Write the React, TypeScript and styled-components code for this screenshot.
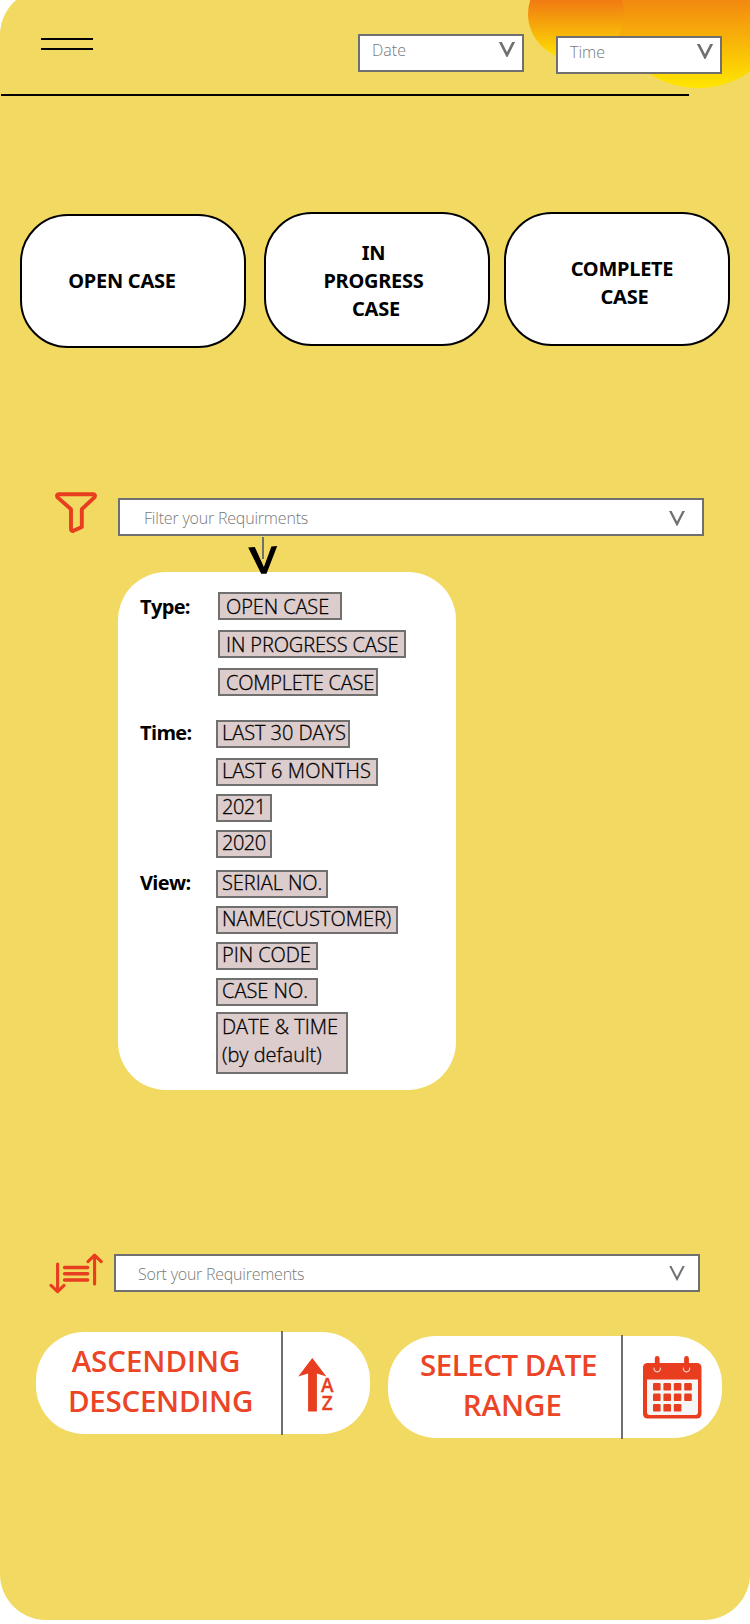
import React from 'react';
import styled, { createGlobalStyle } from 'styled-components';

const ACCENT = '#e83d1e';
const GREY = '#707070';
const SANS = '"Open Sans", "Noto Sans", sans-serif';

const GlobalStyle = createGlobalStyle`
  * { box-sizing: border-box; }
  html, body { margin: 0; background: #fff; }
  body { font-family: ${SANS}; color: #000; }
  svg { display: block; flex: none; }
`;

const Page = styled.div`
  position: relative;
  width: 750px;
  height: 1624px;
  overflow: hidden;
  background: #fff;
`;

const Backdrop = styled.div`
  position: absolute;
  left: 0;
  top: -11px;
  width: 750px;
  height: 1631px;
  border-radius: 46px;
  border-top-right-radius: 0;
  overflow: hidden;
  background: #f2d961;
`;

const Blob = styled.div<{ $x: number; $y: number; $w: number; $h: number }>`
  position: absolute;
  left: ${p => p.$x}px;
  top: ${p => p.$y + 11}px;
  width: ${p => p.$w}px;
  height: ${p => p.$h}px;
  border-radius: 50%;
  background: linear-gradient(#e8401c, #ffe600);
`;

const Content = styled.main`
  position: relative;
  display: flex;
  flex-direction: column;
  align-items: flex-start;
`;

const Header = styled.header`
  display: flex;
  align-items: flex-start;
  height: 94px;
  padding: 34px 28px 0 41px;
`;

const MenuButton = styled.div`
  width: 52px;
  height: 12px;
  margin: 4px 265px 0 0;
  border-top: 2px solid #000;
  border-bottom: 2px solid #000;
`;

const Divider = styled.div`
  width: 688px;
  height: 2px;
  margin-left: 1px;
  background: #000;
`;

const SelectBox = styled.div<{ $width: number; $ml?: number; $mt?: number; $pad: string }>`
  display: flex;
  align-items: flex-start;
  justify-content: space-between;
  width: ${p => p.$width}px;
  height: 38px;
  margin: ${p => p.$mt ?? 0}px 0 0 ${p => p.$ml ?? 0}px;
  padding: ${p => p.$pad};
  border: 2px solid ${GREY};
  background: #fff;
`;

const Placeholder = styled.span<{ $tracking?: number }>`
  font-size: 16px;
  font-weight: 300;
  line-height: 24px;
  letter-spacing: ${p => p.$tracking ?? 0}px;
  color: #787878;
  white-space: nowrap;
`;

const Cases = styled.section`
  display: flex;
  align-items: flex-start;
  height: 136px;
  margin: 116px 0 0 20px;
`;

const CaseCard = styled.div<{ $ml?: number; $mt?: number; $pad: string }>`
  display: flex;
  align-items: center;
  justify-content: center;
  width: 226px;
  height: 134px;
  margin: ${p => p.$mt ?? 0}px 0 0 ${p => p.$ml ?? 0}px;
  padding: ${p => p.$pad};
  border: 2px solid #000;
  border-radius: 48px;
  background: #fff;
  font: 700 20px/28px "Noto Sans", sans-serif;
  letter-spacing: -0.25px;
  text-align: center;
  white-space: pre;
`;

const FieldRow = styled.section<{ $top: number; $left: number }>`
  display: flex;
  align-items: flex-start;
  margin: ${p => p.$top}px 0 0 ${p => p.$left}px;
  height: 44px;
`;

const PointerArrow = styled.svg`
  position: relative;
  z-index: 1;
  margin-left: 246px;
  overflow: visible;
`;

const Panel = styled.section`
  width: 338px;
  height: 518px;
  margin-left: 118px;
  padding: 20px 0 0 22px;
  border-radius: 48px;
  background: #fff;
`;

const Group = styled.div<{ $gap?: number }>`
  display: flex;
  align-items: flex-start;
  margin-top: ${p => p.$gap ?? 0}px;
`;

const GroupLabel = styled.div<{ $lift: number; $width: number }>`
  flex: none;
  width: ${p => p.$width}px;
  margin-top: ${p => 1 - p.$lift}px;
  font-size: 20px;
  font-weight: 700;
  line-height: 28px;
  letter-spacing: -0.65px;
`;

const Chips = styled.div`
  display: flex;
  flex-direction: column;
  align-items: flex-start;
`;

const Chip = styled.div<{ $width: number; $gap: number; $pad: number; $tall?: boolean }>`
  display: flex;
  width: ${p => p.$width}px;
  height: ${p => (p.$tall ? 62 : 28)}px;
  margin-top: ${p => p.$gap}px;
  padding-left: ${p => p.$pad}px;
  border: 2px solid ${GREY};
  background: #dccccc;
`;

const ChipText = styled.span<{ $lift: number; $tracking: number }>`
  margin-top: -${p => p.$lift}px;
  font-size: 20px;
  font-weight: 300;
  line-height: 28px;
  letter-spacing: ${p => p.$tracking}px;
  white-space: pre;
  -webkit-text-stroke: 0.3px #000;
`;

const Actions = styled.section`
  display: flex;
  align-items: flex-start;
  margin: 35px 0 0 36px;
`;

const ActionPill = styled.div<{ $ml?: number; $mt?: number }>`
  display: flex;
  align-items: center;
  width: 334px;
  height: 102px;
  margin: ${p => p.$mt ?? 0}px 0 0 ${p => p.$ml ?? 0}px;
  border-radius: 48px;
  background: #fff;
`;

const ActionText = styled.div<{ $width: number; $padLeft: number }>`
  display: flex;
  flex-direction: column;
  align-items: center;
  width: ${p => p.$width}px;
  padding: 0 0 5px ${p => p.$padLeft}px;
  font-size: 29.5px;
  font-weight: 600;
  line-height: 40px;
  color: #eb4526;
  white-space: nowrap;
`;

const ActionLine = styled.span<{ $tracking: number; $padRight?: number }>`
  padding-right: ${p => p.$padRight ?? 0}px;
  letter-spacing: ${p => p.$tracking}px;
`;

const ActionRule = styled.div`
  flex: none;
  width: 2px;
  height: 104px;
  background: ${GREY};
`;

const IconSlot = styled.div<{ $left: number; $top: number }>`
  padding: ${p => p.$top}px 0 0 ${p => p.$left}px;
`;

const ChevronV = ({ weight = 2.3 }: { weight?: number }) => (
  <svg width="16" height="15" viewBox="0 0 16 15">
    <polyline points="0.3,-2 8,13 15.7,-2" fill="none" stroke={GREY} strokeWidth={weight} />
  </svg>
);

const FunnelIcon = () => (
  <svg width="42" height="42" viewBox="0 0 42 42" fill="none" stroke={ACCENT} strokeWidth="3.9" strokeLinejoin="round">
    <path d="M3.8 2.2H38.2Q41 2.8 39.4 5.4L26.8 17.2V35L18.4 38.8Q16.2 39.4 16 37.2V17.2L2.6 5.4Q1 2.8 3.8 2.2Z" />
  </svg>
);

const SortIcon = () => (
  <svg width="54" height="42" viewBox="0 0 54 42" fill="none" stroke={ACCENT} strokeWidth="3.1" strokeLinecap="round" strokeLinejoin="round">
    <path d="M8.6 12V39.6M2 33.3L8.6 39.6L15 33.3" />
    <path d="M45.6 32V3.2M39 9.6L45.6 3.2L52.2 9.6" />
    <path d="M15.6 15.5H38.6M15.6 21.8H38.6M15.6 28.1H38.6" strokeWidth="3.5" />
  </svg>
);

const AZMark = styled.div`
  display: flex;
  align-items: flex-start;
  height: 54px;
`;

const AZLetters = styled.div`
  display: flex;
  flex-direction: column;
  align-items: center;
  margin: 18px 0 0 -6px;
  font-size: 19px;
  font-weight: 600;
  line-height: 18px;
  color: ${ACCENT};
  -webkit-text-stroke: 0.3px ${ACCENT};
`;

const AZIcon = () => (
  <AZMark>
    <svg width="29" height="54" viewBox="0 0 29 54" fill={ACCENT}>
      <path d="M14.3 0L28.4 18.6L18.9 15.6V53.5H10.1V15.6L0.2 18.6Z" />
    </svg>
    <AZLetters>
      <span>A</span>
      <span>Z</span>
    </AZLetters>
  </AZMark>
);

const DAYS = [
  [0, 0], [1, 0], [2, 0], [3, 0],
  [0, 1], [1, 1], [2, 1], [3, 1],
  [0, 2], [1, 2], [2, 2],
];

const CalendarIcon = () => (
  <svg width="59" height="63" viewBox="0 0 59 63">
    <rect x="0" y="7" width="58.5" height="55.6" rx="4.5" fill={ACCENT} />
    <path d="M4 23.4H55V56Q55 59 52 59H7Q4 59 4 56Z" fill="#f7f6f6" />
    {[14.2, 43.5].map(x => (
      <g key={x}>
        <rect x={x - 2.4} y="0" width="4.8" height="14" rx="2.4" fill={ACCENT} />
        <path d={`M${x - 3} 11.6a3.2 3.2 0 1 0 6 0`} fill="none" stroke="#f7d5cf" strokeWidth="1.1" />
      </g>
    ))}
    {DAYS.map(([c, r]) => (
      <rect key={`${c}-${r}`} x={10 + c * 10.4} y={27 + r * 10.5} width="7.6" height="7.6" rx="1.2" fill={ACCENT} />
    ))}
  </svg>
);

type ChipData = { text: string; width: number; gap?: number; tracking?: number };
type GroupData = { label: string; gap: number; lift: number; labelWidth: number; pad: number; chips: ChipData[] };

const GROUPS: GroupData[] = [
  {
    label: 'Type:', gap: 0, lift: 0, labelWidth: 78, pad: 6,
    chips: [
      { text: 'OPEN CASE', width: 124, tracking: -0.1 },
      { text: 'IN PROGRESS CASE', width: 188, gap: 10, tracking: -0.12 },
      { text: 'COMPLETE CASE', width: 160, gap: 10, tracking: -0.24 },
    ],
  },
  {
    label: 'Time:', gap: 24, lift: 2, labelWidth: 76, pad: 4,
    chips: [
      { text: 'LAST 30 DAYS', width: 134, tracking: -0.05 },
      { text: 'LAST 6 MONTHS', width: 162, gap: 10, tracking: 0.05 },
      { text: '2021', width: 56, gap: 8, tracking: -0.5 },
      { text: '2020', width: 56, gap: 8, tracking: -0.5 },
    ],
  },
  {
    label: 'View:', gap: 12, lift: 2, labelWidth: 76, pad: 4,
    chips: [
      { text: 'SERIAL NO.', width: 112, tracking: -0.05 },
      { text: 'NAME(CUSTOMER)', width: 182, gap: 8 },
      { text: 'PIN CODE', width: 102, gap: 8, tracking: -0.05 },
      { text: 'CASE NO.', width: 102, gap: 8 },
      { text: 'DATE & TIME\n(by default)', width: 132, gap: 6 },
    ],
  },
];

export default function App() {
  return (
    <Page>
      <GlobalStyle />
      <Backdrop>
        <Blob $x={613} $y={-69} $w={170} $h={157} />
        <Blob $x={528} $y={-32} $w={96} $h={92} />
      </Backdrop>
      <Content>
        <Header>
          <MenuButton />
          <SelectBox $width={166} $pad="2px 7px 0 12px">
            <Placeholder>Date</Placeholder>
            <IconSlot $left={0} $top={4}><ChevronV weight={2.7} /></IconSlot>
          </SelectBox>
          <SelectBox $width={166} $ml={32} $mt={2} $pad="2px 7px 0 12px">
            <Placeholder>Time</Placeholder>
            <IconSlot $left={0} $top={4}><ChevronV weight={2.7} /></IconSlot>
          </SelectBox>
        </Header>
        <Divider />

        <Cases>
          <CaseCard $mt={2} $pad="0 22px 0 0">OPEN CASE</CaseCard>
          <CaseCard $ml={18} $pad="4px 7px 0 0">{'IN\nPROGRESS\n CASE'}</CaseCard>
          <CaseCard $ml={14} $pad="8px 0 0 10px">{'COMPLETE\n CASE'}</CaseCard>
        </Cases>

        <FieldRow $top={144} $left={55}>
          <FunnelIcon />
          <SelectBox $width={586} $ml={21} $mt={6} $pad="6px 17px 0 24px">
            <Placeholder $tracking={-0.2}>Filter your Requirments</Placeholder>
            <IconSlot $left={0} $top={5}><ChevronV /></IconSlot>
          </SelectBox>
        </FieldRow>

        <PointerArrow width="34" height="36" viewBox="0 0 34 36">
          <path d="M2.2 11.6L8.8 11L17.9 31L25.4 10.4L31.2 10L20.5 37.8H15.2Z" fill="#000" />
          <rect x="16" y="1" width="2" height="22" fill={GREY} />
        </PointerArrow>

        <Panel>
          {GROUPS.map(group => (
            <Group key={group.label} $gap={group.gap}>
              <GroupLabel $lift={group.lift} $width={group.labelWidth}>{group.label}</GroupLabel>
              <Chips>
                {group.chips.map(chip => {
                  const tall = chip.text.includes('\n');
                  return (
                    <Chip key={chip.text} $width={chip.width} $gap={chip.gap ?? 0} $pad={group.pad} $tall={tall}>
                      <ChipText $lift={tall ? 1 : 1 + group.lift} $tracking={chip.tracking ?? 0}>{chip.text}</ChipText>
                    </Chip>
                  );
                })}
              </Chips>
            </Group>
          ))}
        </Panel>

        <FieldRow $top={162} $left={49}>
          <SortIcon />
          <SelectBox $width={586} $ml={11} $mt={2} $pad="6px 13px 0 22px">
            <Placeholder $tracking={-0.24}>Sort your Requirements</Placeholder>
            <IconSlot $left={0} $top={4}><ChevronV weight={2} /></IconSlot>
          </SelectBox>
        </FieldRow>

        <Actions>
          <ActionPill $mt={1}>
            <ActionText $width={245} $padLeft={4}>
              <ActionLine $tracking={-0.05} $padRight={9}>ASCENDING</ActionLine>
              <ActionLine $tracking={-0.25}>DESCENDING</ActionLine>
            </ActionText>
            <ActionRule />
            <IconSlot $left={15} $top={3}><AZIcon /></IconSlot>
          </ActionPill>
          <ActionPill $ml={18} $mt={5}>
            <ActionText $width={233} $padLeft={8}>
              <ActionLine $tracking={-0.5}>SELECT DATE</ActionLine>
              <ActionLine $tracking={0}>&nbsp;RANGE</ActionLine>
            </ActionText>
            <ActionRule />
            <IconSlot $left={20} $top={0}><CalendarIcon /></IconSlot>
          </ActionPill>
        </Actions>
      </Content>
    </Page>
  );
}
